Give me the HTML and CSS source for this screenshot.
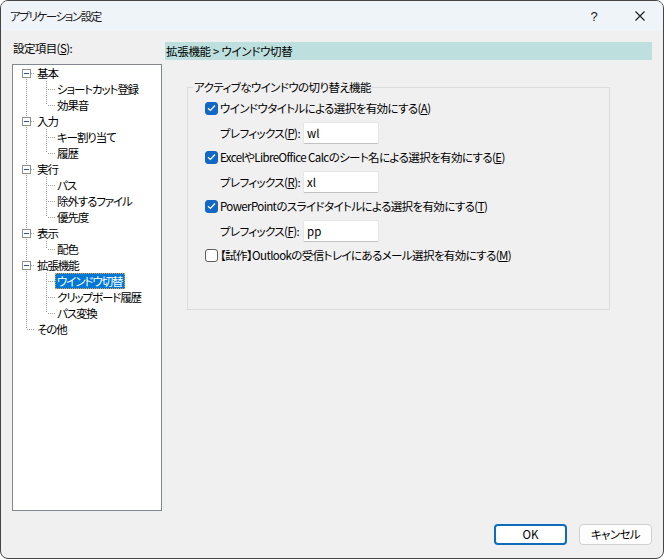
FILE: index.html
```html
<!DOCTYPE html>
<html lang="ja">
<head>
<meta charset="utf-8">
<title>アプリケーション設定</title>
<link rel="stylesheet" href="styles.css">
</head>
<body>
<div class="window">
  <div class="titlebar">
    <span class="title">アプリケーション設定</span>
    <div class="caption">
      <span class="cap-btn help">?</span>
      <span class="cap-btn close"><svg width="10" height="10" viewBox="0 0 10 10"><path d="M0.5 0.5 L9.5 9.5 M9.5 0.5 L0.5 9.5" stroke="#1a1a1a" stroke-width="1.1" fill="none"/></svg></span>
    </div>
  </div>
  <div class="content">
    <div class="left">
      <div class="side-label">設定項目(<u>S</u>):</div>
      <div class="tree">
        <div class="node first">
          <div class="row root"><span class="tog"></span><span class="txt">基本</span></div>
          <div class="kids">
            <div class="row leaf"><span class="txt">ショートカット登録</span></div>
            <div class="row leaf"><span class="txt">効果音</span></div>
          </div>
        </div>
        <div class="node">
          <div class="row root"><span class="tog"></span><span class="txt">入力</span></div>
          <div class="kids">
            <div class="row leaf"><span class="txt">キー割り当て</span></div>
            <div class="row leaf"><span class="txt">履歴</span></div>
          </div>
        </div>
        <div class="node">
          <div class="row root"><span class="tog"></span><span class="txt">実行</span></div>
          <div class="kids">
            <div class="row leaf"><span class="txt">パス</span></div>
            <div class="row leaf"><span class="txt">除外するファイル</span></div>
            <div class="row leaf"><span class="txt">優先度</span></div>
          </div>
        </div>
        <div class="node">
          <div class="row root"><span class="tog"></span><span class="txt">表示</span></div>
          <div class="kids">
            <div class="row leaf"><span class="txt">配色</span></div>
          </div>
        </div>
        <div class="node">
          <div class="row root"><span class="tog"></span><span class="txt">拡張機能</span></div>
          <div class="kids">
            <div class="row leaf"><span class="txt selected">ウインドウ切替</span></div>
            <div class="row leaf"><span class="txt">クリップボード履歴</span></div>
            <div class="row leaf"><span class="txt">パス変換</span></div>
          </div>
        </div>
        <div class="node last">
          <div class="row root noexp"><span class="txt">その他</span></div>
        </div>
      </div>
    </div>
    <div class="right">
      <div class="page-header">拡張機能 &gt; ウインドウ切替</div>
      <fieldset class="group">
        <legend>アクティブなウインドウの切り替え機能</legend>
        <div class="rows">
          <div class="check-row"><span class="cb checked"><svg width="9" height="8" viewBox="0 0 9 8"><path d="M1 4.2 L3.4 6.5 L8 1.5" stroke="#fff" stroke-width="1.2" fill="none"/></svg></span><span>ウインドウタイトルによる選択を有効にする(<u>A</u>)</span></div>
          <div class="prefix-row"><span class="prefix-label">プレフィックス(<u>P</u>):</span><span class="input">wl</span></div>
          <div class="check-row"><span class="cb checked"><svg width="9" height="8" viewBox="0 0 9 8"><path d="M1 4.2 L3.4 6.5 L8 1.5" stroke="#fff" stroke-width="1.2" fill="none"/></svg></span><span>ExcelやLibreOffice Calcのシート名による選択を有効にする(<u>E</u>)</span></div>
          <div class="prefix-row"><span class="prefix-label">プレフィックス(<u>R</u>):</span><span class="input">xl</span></div>
          <div class="check-row"><span class="cb checked"><svg width="9" height="8" viewBox="0 0 9 8"><path d="M1 4.2 L3.4 6.5 L8 1.5" stroke="#fff" stroke-width="1.2" fill="none"/></svg></span><span>PowerPointのスライドタイトルによる選択を有効にする(<u>T</u>)</span></div>
          <div class="prefix-row"><span class="prefix-label">プレフィックス(<u>F</u>):</span><span class="input">pp</span></div>
          <div class="check-row"><span class="cb"></span><span>【試作】Outlookの受信トレイにあるメール選択を有効にする(<u>M</u>)</span></div>
        </div>
      </fieldset>
    </div>
  </div>
  <div class="footer">
    <button class="btn ok">OK</button>
    <button class="btn">キャンセル</button>
  </div>
</div>
</body>
</html>
```

FILE: styles.css
```css
* { box-sizing: border-box; }

html, body {
  margin: 0;
  padding: 0;
  background: #ffffff;
}

body {
  font-family: "Noto Sans CJK JP", "Noto Sans", sans-serif;
  font-size: 11.5px;
  letter-spacing: -0.6px;
  color: #000;
  font-feature-settings: "palt" 1;
}

u { text-decoration: underline; text-underline-offset: 1px; }

.window {
  width: 664px;
  height: 559px;
  border: 1px solid #454545;
  border-radius: 8px;
  background: #f0f0f0;
  overflow: hidden;
  display: flex;
  flex-direction: column;
}

.titlebar {
  height: 30px;
  background: #eff4f9;
  display: flex;
  align-items: center;
  justify-content: space-between;
  padding-left: 9px;
}

.title {
  font-size: 11.5px;
  letter-spacing: -1.4px;
  line-height: 16px;
  color: #1a1a1a;
}

.caption {
  display: flex;
  height: 30px;
}

.cap-btn {
  width: 46px;
  height: 30px;
  display: flex;
  align-items: center;
  justify-content: center;
}

.help {
  font-family: "Liberation Sans", sans-serif;
  font-size: 13px;
  letter-spacing: 0;
  color: #1a1a1a;
}

.content {
  display: flex;
  gap: 3px;
  padding: 9px 11px 0 11px;
}

.left {
  width: 150px;
  flex: none;
}

.side-label {
  height: 16px;
  line-height: 16px;
  margin-bottom: 8px;
  padding-left: 1px;
}

.tree {
  height: 447px;
  background: #fff;
  border: 1px solid #828790;
}

.node {
  position: relative;
}

.node::before {
  content: "";
  position: absolute;
  left: 13px;
  top: 0;
  bottom: 0;
  width: 1px;
  background: repeating-linear-gradient(to bottom, #a0a0a0 0 1px, transparent 1px 2px);
}

.node.first::before { top: 8px; }
.node.last::before { bottom: auto; height: 8px; }

.row {
  position: relative;
  height: 16px;
  line-height: 16px;
  white-space: nowrap;
}

.row.root { padding-left: 22px; }
.row.leaf { padding-left: 42px; }

.row.root::after {
  content: "";
  position: absolute;
  left: 14px;
  top: 8px;
  width: 7px;
  height: 1px;
  background: repeating-linear-gradient(to right, #a0a0a0 0 1px, transparent 1px 2px);
}

.row.leaf::after {
  content: "";
  position: absolute;
  left: 34px;
  top: 8px;
  width: 8px;
  height: 1px;
  background: repeating-linear-gradient(to right, transparent 0 1px, #a0a0a0 1px 2px);
}

.kids {
  position: relative;
}

.kids::before {
  content: "";
  position: absolute;
  left: 33px;
  top: 0;
  bottom: 8px;
  width: 1px;
  background: repeating-linear-gradient(to bottom, #a0a0a0 0 1px, transparent 1px 2px);
}

.tog {
  position: absolute;
  left: 9px;
  top: 4px;
  width: 9px;
  height: 9px;
  background: #fff;
  border: 1px solid #919191;
  z-index: 1;
}

.tog::after {
  content: "";
  position: absolute;
  left: 1px;
  top: 3px;
  width: 5px;
  height: 1px;
  background: #2f4f9f;
}

.txt {
  display: inline-block;
  height: 16px;
  padding: 0 2px 0 1px;
  border: 1px solid transparent;
  line-height: 14px;
  font-size: 11.5px;
  letter-spacing: -1.1px;
}

.txt.selected {
  background: #0078d7;
  color: #fff;
  border: 1px dotted #f2a13a;
}

.right {
  flex: 1;
  display: flex;
  flex-direction: column;
}

.page-header {
  margin-top: 2px;
  height: 18px;
  line-height: 18px;
  background: #bde0de;
  padding-left: 1px;
  letter-spacing: -0.3px;
}

.group {
  margin: 19px 42px 0 22px;
  padding: 2px 10px 43px 17px;
  border: 1px solid #dcdcdc;
  min-width: 0;
}

.group legend {
  margin-left: -12px;
  padding: 0 1px;
  line-height: 16px;
}

.rows {
  display: flex;
  flex-direction: column;
  gap: 2.5px;
}

.check-row {
  height: 22px;
  display: flex;
  align-items: center;
  gap: 2px;
  white-space: nowrap;
}

.cb {
  width: 13px;
  height: 13px;
  flex: none;
  border-radius: 3px;
  border: 1px solid #5d5d5d;
  background: #fff;
  display: flex;
  align-items: center;
  justify-content: center;
}

.cb.checked {
  background: #1268c4;
  border-color: #1268c4;
}

.prefix-row {
  height: 22px;
  display: flex;
  align-items: center;
  padding-left: 15px;
}

.prefix-label {
  width: 83px;
  flex: none;
  white-space: nowrap;
}

.input {
  width: 76px;
  height: 22px;
  background: #fff;
  border: 1px solid #e6e6e6;
  border-bottom-color: #c2c2c2;
  border-radius: 2px;
  padding-left: 3px;
  line-height: 20px;
  letter-spacing: 0;
}

.footer {
  margin-top: 13px;
  padding: 0 11px 0 0;
  display: flex;
  justify-content: flex-end;
  gap: 12px;
}

.btn {
  width: 73px;
  height: 21px;
  font-family: "Noto Sans CJK JP", "Noto Sans", sans-serif;
  font-size: 11.5px;
  letter-spacing: -0.6px;
  font-feature-settings: "palt" 1;
  line-height: 17px;
  padding: 0;
  background: #fdfdfd;
  border: 1px solid #d0d0d0;
  border-radius: 4px;
  color: #000;
}

.btn.ok {
  background: #fff;
  border: 2px solid #0f6cbd;
  letter-spacing: 0;
}
```
